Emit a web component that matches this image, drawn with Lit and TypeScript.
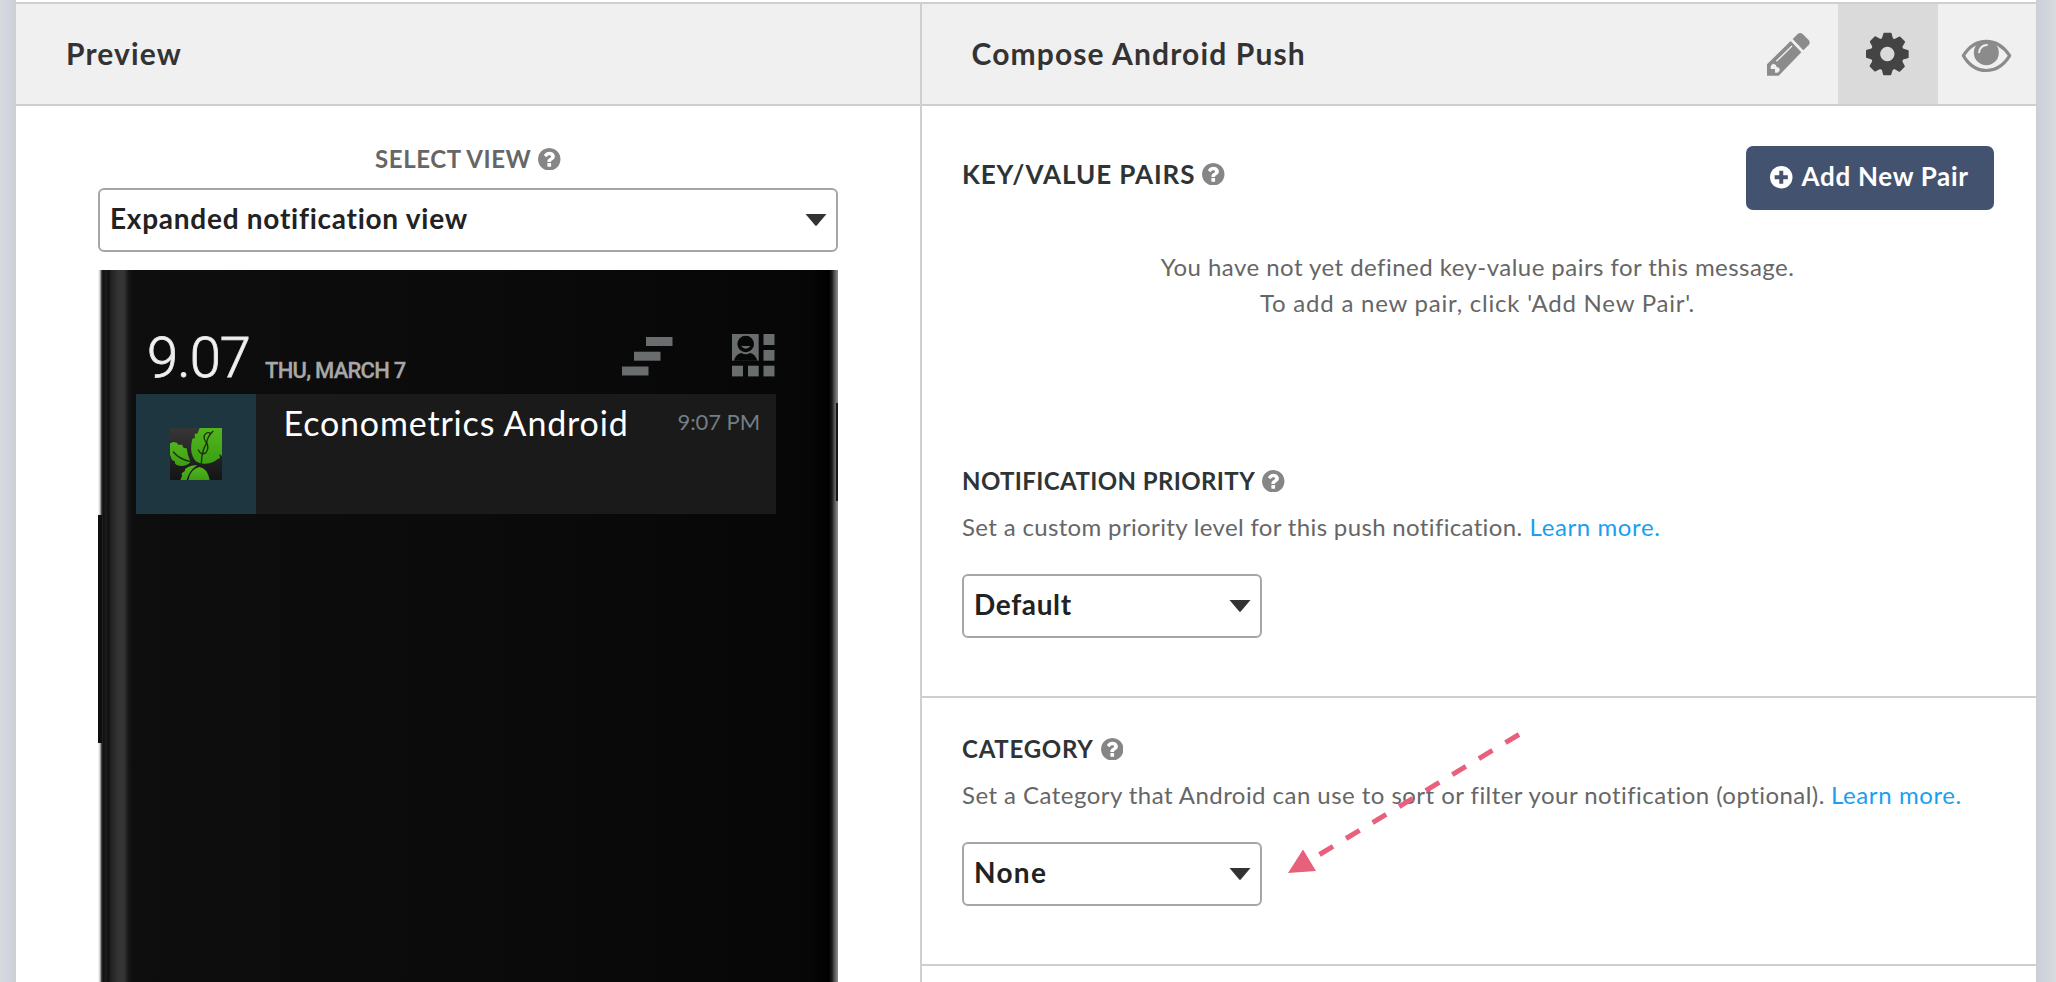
import { LitElement, html, css, svg } from "lit";
import { customElement, property } from "lit/decorators.js";

const gearTeeth = [0, 45, 90, 135, 180, 225, 270, 315];

@customElement("help-icon")
class HelpIcon extends LitElement {
  static styles = css`
    :host { display: block; flex: none; width: 22.500px; height: 22.500px; }
    .glyph { display: block; width: 100%; height: 100%; fill: #868686; }
  `;
  render() {
    return html`<svg class="glyph" viewBox="0 0 1536 1536">
      <path d="M896 1248v-192q0-14-9-23t-23-9h-192q-14 0-23 9t-9 23v192q0 14 9 23t23 9h192q14 0 23-9t9-23zm256-672q0-88-55.500-163t-138.500-116-170-41q-243 0-371 213-15 24 8 42l132 100q7 6 19 6 16 0 25-12 53-68 86-92 34-24 86-24 48 0 85.500 26t37.500 59q0 38-20 61t-68 45q-63 28-115.500 86.500t-52.500 125.500v36q0 14 9 23t23 9h192q14 0 23-9t9-23q0-19 21.500-49.500t54.500-49.500q32-18 49-28.500t46-35 44.500-48 28-60.500 12.500-81zm384 192q0 209-103 385.500t-279.500 279.500-385.500 103-385.500-103-279.500-279.500-103-385.500 103-385.500 279.500-279.500 385.500-103 385.500 103 279.500 279.500 103 385.500z"/>
    </svg>`;
  }
}

@customElement("select-box")
class SelectBox extends LitElement {
  @property() value = "";
  static styles = css`
    :host {
      display: flex; justify-content: space-between; align-items: flex-start;
      box-sizing: border-box; height: 64px; padding: 0 9px 0 10px;
      border: 2px solid #a6a6a6; border-radius: 6px; background: #fff;
    }
    .value { font-size: 28px; font-weight: 700; line-height: 56px; color: #222; white-space: nowrap; letter-spacing: inherit; }
    .caret { display: block; width: 22px; height: 12px; margin-top: 24px; fill: #333; }
  `;
  render() {
    return html`<span class="value">${this.value}</span>
      <svg class="caret" viewBox="0 0 22 12"><path d="M0.500 0h21L12 11.300q-1 1-2 0z"/></svg>`;
  }
}

@customElement("phone-preview")
class PhonePreview extends LitElement {
  static styles = css`
    :host {
      display: block; position: relative; height: 712px; overflow: hidden;
      background:
        linear-gradient(to right, #fff 0, #c9c9c9 2px, #444 3.500px, #0f0f0f 5px, #1d1d1d 8px, #111 10px, transparent 11px) left / 12px 100% no-repeat,
        linear-gradient(to left, #8a8a8a 0, #777 1.500px, #4a4a4a 4px, #1a1a1a 6px, #000 9px, transparent 26px) right / 26px 100% no-repeat,
        linear-gradient(to right, transparent 10px, #222 13px, #343434 20px, #353535 26px, #141414 31px, transparent 35px) left / 40px 100% no-repeat,
        linear-gradient(to right, #0e0e0e, #0b0b0b 50%, #060606);
    }
    .key { position: absolute; background: #0d0e0e; width: 4px; }
    .volume { left: 0; top: 245px; height: 228px; }
    .power { right: 0; top: 133px; height: 98px; width: 2px; background: #161818; }
    .status { display: flex; align-items: baseline; box-sizing: border-box; height: 124px; padding: 60px 62px 0 49px; font-family: Roboto, sans-serif; }
    .clock { flex: none; width: 118px; font-size: 56px; font-weight: 300; line-height: 56px; letter-spacing: -0.900px; color: #f2f2f2; -webkit-text-stroke: 0.900px #e4e4e4; }
    .date { font-size: 22px; font-weight: 500; letter-spacing: -0.760px; color: #a9a9a9; white-space: nowrap; transform: translateY(1px); -webkit-text-stroke: 0.300px #a0a0a0; }
    .tools { display: flex; gap: 56px; margin: -1px 0 0 auto; align-self: flex-start; }
    .tool { display: block; height: 50px; fill: #696d6d; }
    .card { display: flex; width: 640px; height: 120px; margin-left: 38px; background: #1a1a1a; }
    .thumb { display: flex; align-items: center; justify-content: center; width: 120px; height: 120px; flex: none; background: #1d3640; }
    .leaf { display: block; width: 52px; height: 52px; }
    .title { margin-left: 27.500px; font-size: 34px; line-height: 58px; letter-spacing: 0.830px; color: #fff; white-space: nowrap; }
    .time { margin: 0 16px 0 auto; font-size: 22px; line-height: 55px; letter-spacing: -0.080px; color: #747e83; white-space: nowrap; }
  `;
  render() {
    return html`
      <div class="key volume"></div><div class="key power"></div>
      <div class="status">
        <span class="clock">9.07</span><span class="date">THU, MARCH 7</span>
        <div class="tools">
          <svg class="tool" width="54" viewBox="620 329 54 50">
            <rect x="646" y="337" width="26.500" height="9"/><rect x="634" y="351.700" width="26.500" height="9"/><rect x="622" y="366.500" width="26.500" height="9"/>
          </svg>
          <svg class="tool" width="46" viewBox="730 329 46 50">
            <rect x="732" y="334" width="26.700" height="26.700"/>
            <rect x="763.500" y="334" width="11" height="11"/><rect x="763.500" y="350" width="11" height="10.700"/>
            <rect x="732" y="365.700" width="11" height="10.700"/><rect x="748" y="365.700" width="10.700" height="10.700"/><rect x="763.500" y="365.700" width="11" height="10.700"/>
            <circle cx="745.700" cy="344" r="8.300" fill="#070707"/>
            <path d="M741 346h9.500q-4.700 5.500-9.500 0z"/>
            <path d="M734 360.700q2-7 7.500-7.700q4 2.400 8.500 0q5 .7 7.300 7.700z" fill="#070707"/>
          </svg>
        </div>
      </div>
      <div class="card">
        <div class="thumb">
          <svg class="leaf" viewBox="30 30 156 156">
            <defs>
              <linearGradient id="g" x1="0" y1="0" x2="0" y2="1"><stop offset="0" stop-color="#52b51c"/><stop offset="1" stop-color="#3c9f14"/></linearGradient>
              <linearGradient id="d" x1="0" y1="0" x2="0" y2="1"><stop offset="0" stop-color="#363636"/><stop offset="1" stop-color="#141414"/></linearGradient>
            </defs>
            <rect x="30" y="30" width="156" height="156" fill="url(#d)"/>
            <path fill="url(#g)" d="M119 30L112 47L104 47L105 60L97 62L94 78Q90 110 106 128Q118 138 136 137Q160 136 172 124L180 120L178 108L186 114V30Z"/>
            <path fill="url(#g)" d="M30 76L40 72L51 74L54 80L66 80L71 90L80 91Q82 112 92 132Q76 148 52 142L46 138L44 130L36 126L30 110Z"/>
            <path fill="url(#g)" d="M61 186L66 174L65 166L74 160L76 152L86 146Q98 140 112 142Q88 156 80 186Z"/>
            <path fill="url(#g)" d="M85 186Q90 154 118 147Q142 150 149 186Z"/>
            <g fill="none" stroke="#1b3010" stroke-width="4" stroke-linecap="round">
              <path d="M40 102Q58 124 92 131"/>
              <path d="M152 46Q140 40 133 52Q130 64 140 74Q148 90 138 104Q124 114 115 96" />
              <path d="M159 40Q142 56 140 74Q130 92 126 112L124 136"/>
            </g>
          </svg>
        </div>
        <span class="title">Econometrics Android</span>
        <span class="time">9:07 PM</span>
      </div>`;
  }
}

@customElement("app-root")
class AppRoot extends LitElement {
  static styles = css`
    :host {
      display: flex; position: relative; box-sizing: border-box; width: 100%; height: 982px; overflow: hidden;
      font-family: Lato, "Open Sans", sans-serif; background: #fff; color: #666;
    }
    .gutter { flex: none; box-sizing: border-box; }
    .gutter-left { width: 16px; border-right: 2px solid #cfcfcf; background: linear-gradient(to right, #d7dade, #cdd1db); }
    .gutter-right { width: 20px; border-left: 2px solid #cfcfcf; background: linear-gradient(to right, #cbd0da, #d8dbdf); }
    .panel { padding-top: 2px; }
    .preview { width: 904px; flex: none; }
    .compose { flex: 1; min-width: 0; }
    .bar { display: flex; height: 100px; border: solid #cfcfcf; border-width: 2px 0; background: #f0f0f0; }
    .compose .bar, .compose .body { border-left: 2px solid #cfcfcf; }
    .bar-title { font-size: 30px; font-weight: 700; line-height: 98px; color: #333; white-space: nowrap; letter-spacing: 1.120px; }
    .preview .bar-title { padding-left: 50px; }
    .compose .bar-title { padding-left: 49.500px; margin-right: auto; }
    .tab { width: 100px; height: 100px; flex: none; }
    .tab:last-child { width: 98px; }
    .tab.active { background: #dadada; }
    .tab-icon { display: block; width: 100%; height: 100%; }
    .preview .body { padding: 35px 82px 0; }
    .label-row { display: flex; align-items: center; gap: 7px; height: 36px; white-space: nowrap; }
    .label { font-size: 24px; font-weight: 700; line-height: 36px; color: #2e3436; letter-spacing: 0.390px; }
    .centered { justify-content: center; margin-bottom: 11px; }
    .centered .label { color: #666; letter-spacing: 0.560px; }
    .view-select { margin-bottom: 18px; letter-spacing: 0.740px; }
    .compose .body { height: 876px; }
    .section { padding: 33px 42px 58px 40px; border-bottom: 2px solid #cfcfcf; }
    .section:first-child { padding-top: 40px; }
    .pairs-head { display: flex; justify-content: space-between; align-items: flex-start; }
    .pairs-head .label-row { margin-top: 10px; }
    .pairs-head .label { font-size: 26px; letter-spacing: 0.920px; }
    .add { display: flex; gap: 9px; box-sizing: border-box; width: 248px; height: 64px; padding: 0 0 0 24px; border: 0; border-radius: 7px; background: #43536f; color: #fff; font: 700 26px/61px Lato, sans-serif; letter-spacing: 0.700px; white-space: nowrap; }
    .plus { display: block; width: 22.500px; height: 22.500px; margin-top: 20px; flex: none; }
    .empty { margin: 39px 0 142px; padding-right: 1px; font-size: 24px; line-height: 36px; text-align: center; }
    .empty-line { display: block; letter-spacing: 0.460px; }
    .empty-line.second { letter-spacing: 0.780px; }
    .hint { margin: 10px 0 29px; font-size: 24px; line-height: 36px; white-space: nowrap; }
    .link { color: #1a9ff0; letter-spacing: 0.600px; }
    .priority-text { letter-spacing: 0.345px; margin-right: 1px; }
    .category-text { letter-spacing: 0.455px; }
    .narrow { width: 300px; letter-spacing: 0.650px; }
    .narrow.none { letter-spacing: 1.300px; }
    .category-label { letter-spacing: 0.750px; }
    .pointer { position: absolute; left: 1280px; top: 720px; width: 250px; height: 160px; pointer-events: none; }
  `;
  render() {
    return html`
      <div class="gutter gutter-left"></div>
      <div class="panel preview">
        <div class="bar"><span class="bar-title">Preview</span></div>
        <div class="body">
          <div class="label-row centered"><span class="label">SELECT VIEW</span><help-icon></help-icon></div>
          <select-box class="view-select" value="Expanded notification view"></select-box>
          <phone-preview></phone-preview>
        </div>
      </div>
      <div class="panel compose">
        <div class="bar">
          <span class="bar-title">Compose Android Push</span>
          <div class="tab"><svg class="tab-icon" viewBox="-36 -48 300 300">
            <g fill="#8b8b8b">
              <path d="M51 133L122 63L154 97L86 167H51Z"/><path d="M128 57L143 42Q150 36 158 42L176 60Q182 67 176 75L160 91Z"/>
            </g>
            <path d="M79 124L126 78" stroke="#f0f0f0" stroke-width="4"/>
            <path d="M68 131L77 134L80 141L87 143L90 151L83 158H75V147H62V139Z" fill="#f0f0f0"/>
          </svg></div>
          <div class="tab active"><svg class="tab-icon" viewBox="264 -48 300 300">
            <g fill="#444"><path fill-rule="evenodd" d="M412 52a50 50 0 1 0 .1 0zM412 80.500a21.500 21.500 0 1 1-.1 0z"/>
            ${gearTeeth.map(a => svg`<path transform="rotate(${a} 412 102)" d="M394 60L400 41Q400 38 403 38H422Q425 38 425 41L430 60Z"/>`)}</g>
          </svg></div>
          <div class="tab"><svg class="tab-icon" viewBox="564 -48 294 300">
            <path d="M640 107C658 78 684 64 709 64S760 78 779 107C760 138 734 151.500 709 151.500S658 138 640 107Z" fill="none" stroke="#8b8b8b" stroke-width="9.500" stroke-linejoin="round"/>
            <circle cx="709" cy="98" r="37.500" fill="#8b8b8b"/>
            <path d="M687 99A24 24 0 0 1 713 75" fill="none" stroke="#f0f0f0" stroke-width="6"/>
          </svg></div>
        </div>
        <div class="body">
          <div class="section">
            <div class="pairs-head">
              <div class="label-row"><span class="label">KEY/VALUE PAIRS</span><help-icon></help-icon></div>
              <button class="add">
                <svg class="plus" viewBox="0 0 68 68"><circle cx="34" cy="34" r="34" fill="#fff"/><path d="M34 20v28M20 34h28" stroke="#43536f" stroke-width="12" stroke-linecap="square"/></svg>
                <span>Add New Pair</span>
              </button>
            </div>
            <div class="empty">
              <span class="empty-line">You have not yet defined key-value pairs for this message.</span>
              <span class="empty-line second">To add a new pair, click 'Add New Pair'.</span>
            </div>
            <div class="label-row"><span class="label">NOTIFICATION PRIORITY</span><help-icon></help-icon></div>
            <div class="hint"><span class="priority-text">Set a custom priority level for this push notification.</span> <span class="link">Learn more.</span></div>
            <select-box class="narrow" value="Default"></select-box>
          </div>
          <div class="section">
            <div class="label-row"><span class="label category-label">CATEGORY</span><help-icon></help-icon></div>
            <div class="hint"><span class="category-text">Set a Category that Android can use to sort or filter your notification (optional).</span> <span class="link">Learn more.</span></div>
            <select-box class="narrow none" value="None"></select-box>
          </div>
        </div>
      </div>
      <div class="gutter gutter-right"></div>
      <svg class="pointer" viewBox="1280 720 250 160">
        <path d="M1519 734.500L1312 859" stroke="#e8617c" stroke-width="5" stroke-dasharray="15.800 15.200"/>
        <path d="M1288 873L1303 849.500L1316 871Z" fill="#e8617c"/>
      </svg>`;
  }
}
